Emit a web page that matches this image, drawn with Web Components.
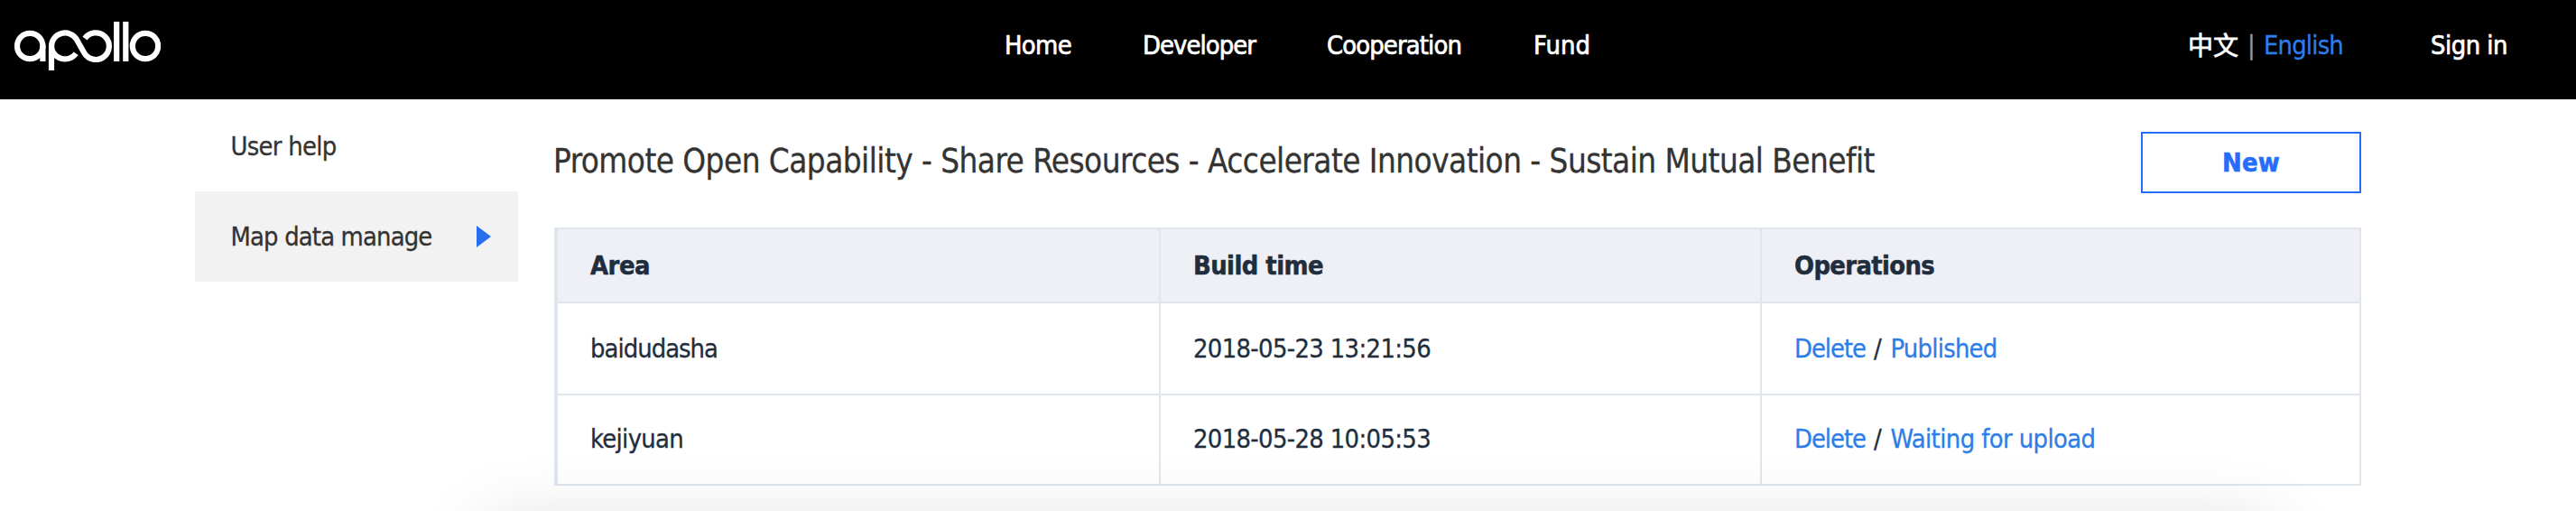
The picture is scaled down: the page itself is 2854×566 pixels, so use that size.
<!DOCTYPE html>
<html lang="en">
<head>
<meta charset="utf-8">
<title>Apollo - Map data manage</title>
<style>
html,body{margin:0;height:566px;overflow:hidden;background:#fff}
body{font:28.800px/41px "DejaVu Sans Condensed","DejaVu Sans",sans-serif;font-stretch:condensed;color:#333;-webkit-text-stroke:.3px currentColor}
</style>
</head>
<body>
<apollo-page></apollo-page>
<script>
const define=(name,html,setup)=>customElements.define(name,class extends HTMLElement{
  connectedCallback(){
    if(this.shadowRoot)return;
    this.attachShadow({mode:'open'}).innerHTML=html;
    if(setup)setup(this);
  }
});

/* A run of text tracked so that it spans the number of pixels in its "span" attribute. */
define('fit-text','<style>:host{display:inline-block;white-space:pre}</style><span><slot></slot></span>',el=>{
  const want=+el.getAttribute('span'),n=el.textContent.length;
  const have=el.shadowRoot.querySelector('span').getBoundingClientRect().width;
  el.style.letterSpacing=((want-have)/n).toFixed(3)+'px';
});

define('apollo-logo',`<style>:host{display:block;width:162px;height:54px}svg{display:block}</style>
<svg width="162" height="54" viewBox="0 0 162 54" fill="none" stroke="#fff" stroke-width="6.2">
<circle cx="17.200" cy="27" r="14.200"/><path d="M31.400 26V44"/>
<path d="M41 54V27A15 14.800 0 0 1 68.900 19.700L77.100 34.300A14.800 14.800 0 1 0 78 18.600M41 27A15 14.800 0 0 0 68.200 35.200"/>
<path d="M113.200 0V44M123.300 0V44"/><circle cx="145" cy="27" r="14.200"/></svg>`);

define('top-bar',`<style>
:host{display:flex;height:110px;background:#000;color:#fff;-webkit-text-stroke:.7px currentColor}
apollo-logo{margin:24px 0 0 16px}
nav{display:flex;margin:30px 0 0 935px;width:1311px}
nav fit-text:nth-child(1){width:153px}nav fit-text:nth-child(2){width:204px}nav fit-text:nth-child(3){width:229px}
.lang{width:269px;margin-top:30px;display:flex}
.zh{font-family:"Noto Sans CJK SC",sans-serif;font-size:28px;width:66px;margin-top:-1px}
.bar{color:#999;width:18px;-webkit-text-stroke:.3px currentColor}
.en{color:#2d7ee9;-webkit-text-stroke:.3px currentColor}.in{margin-top:30px}
</style><apollo-logo></apollo-logo>
<nav><fit-text span="74">Home</fit-text><fit-text span="125">Developer</fit-text><fit-text span="149">Cooperation</fit-text><fit-text span="63">Fund</fit-text></nav>
<div class="lang"><fit-text class="zh" span="56">中文</fit-text><span class="bar">|</span><fit-text class="en" span="88">English</fit-text></div>
<fit-text class="in" span="85">Sign in</fit-text>`);

define('side-item',`<style>
:host{display:flex;align-items:center;justify-content:space-between;height:100px;box-sizing:border-box;padding:0 30px 0 39.500px}
:host([active]){background:#f2f2f2}
svg{display:none}:host([active]) svg{display:block}
</style><slot></slot><svg width="16" height="24"><path d="M0 0L16 12L0 24Z" fill="#276eee"/></svg>`);

define('new-button',`<style>:host{display:flex;align-items:center;justify-content:center;box-sizing:border-box;width:244px;height:68px;border:2px solid #266dfb;color:#266dfb;font-weight:bold;-webkit-text-stroke:.6px currentColor}</style><slot></slot>`);

define('data-row',`<style>
:host{display:grid;grid-template-columns:668px 666px 664px;height:100px;border-bottom:2px solid #e0e6ed;color:#1f2d3d}
:host([head]){height:80px;background:#eff0f6;font-weight:bold;-webkit-text-stroke:.5px currentColor}
:host([last]){height:98px}
div{display:flex;align-items:center;border-right:2px solid #e0e6ed;padding-left:36px;box-sizing:border-box}
:host([last]) div{padding-bottom:1px}
</style><div><slot name="a"></slot></div><div><slot name="b"></slot></div><div><slot name="c"></slot></div>`);

define('data-table',`<style>:host{display:block;border:solid #e0e6ed;border-width:2px 0 0 4px;box-sizing:border-box;width:2002px}</style><slot></slot>`);

define('bottom-shade',`<style>:host{display:block;position:absolute;left:544px;top:586px;width:1966px;height:100px;box-shadow:0 0 80px 6px rgba(0,0,0,.14)}</style>`);

define('apollo-page',`<style>
:host{display:block;position:relative;height:566px;overflow:hidden}
main{display:flex;padding:2px 0 0 216px}
aside{width:358px}
section{margin:34px 0 0 40px;width:2002px}
.title{display:flex;justify-content:space-between;margin-bottom:38px}
h1{font-size:36.500px;font-weight:normal;line-height:44px;margin:11px 0 0 -1px}
a{color:#2d7ee9;display:inline-block}
.ops{display:flex}
.ops a:first-child{width:88px}.ops span{width:18.500px}
</style>
<top-bar></top-bar>
<main>
<aside><side-item><fit-text span="117">User help</fit-text></side-item><side-item active><fit-text span="223">Map data manage</fit-text></side-item></aside>
<section>
<div class="title"><h1><fit-text span="1464">Promote Open Capability - Share Resources - Accelerate Innovation - Sustain Mutual Benefit</fit-text></h1><new-button><fit-text span="64">New</fit-text></new-button></div>
<data-table>
<data-row head><fit-text slot="a" span="66">Area</fit-text><fit-text slot="b" span="144">Build time</fit-text><fit-text slot="c" span="155">Operations</fit-text></data-row>
<data-row><fit-text slot="a" span="141">baidudasha</fit-text><fit-text slot="b" span="263">2018-05-23 13:21:56</fit-text><div class="ops" slot="c"><a><fit-text span="79">Delete</fit-text></a><span>/</span><a><fit-text span="118">Published</fit-text></a></div></data-row>
<data-row last><fit-text slot="a" span="103">kejiyuan</fit-text><fit-text slot="b" span="263">2018-05-28 10:05:53</fit-text><div class="ops" slot="c"><a><fit-text span="79">Delete</fit-text></a><span>/</span><a><fit-text span="227">Waiting for upload</fit-text></a></div></data-row>
</data-table>
</section>
</main>
<bottom-shade></bottom-shade>`);
</script>
</body>
</html>
